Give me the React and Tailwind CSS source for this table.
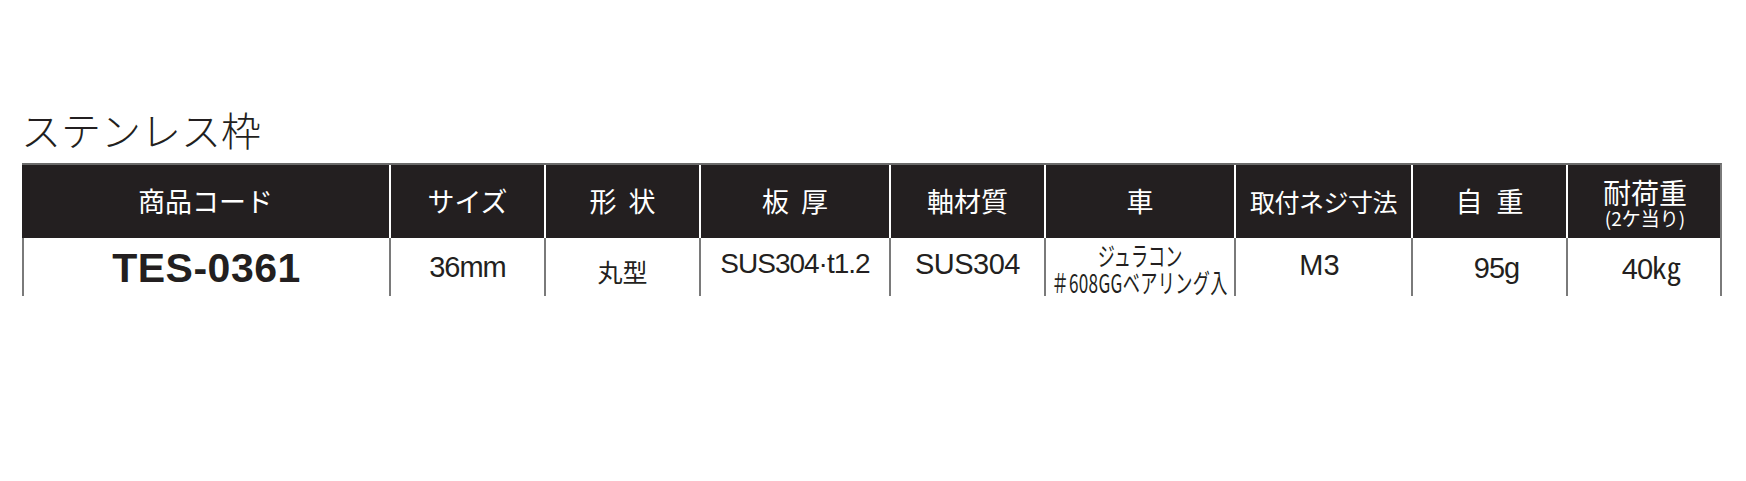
const jp = { fontFamily: '"Noto Sans CJK JP", "Noto Sans", sans-serif' }
const lat = { fontFamily: '"Liberation Sans", "Noto Sans CJK JP", sans-serif' }

const cols = 'grid grid-cols-[367px_155px_155px_190px_155px_190px_177px_155px_156px]'

function Head({ children, first, className = '' }) {
  return (
    <div className={`h-[73px] flex items-center justify-center text-white ${first ? '' : 'border-l-2 border-white'} ${className}`}>
      {children}
    </div>
  )
}

function Cell({ children, className = '' }) {
  return (
    <div className={`h-[58px] flex items-center justify-center border-l-2 border-[#7a7a7a] text-[#231f20] ${className}`}>
      {children}
    </div>
  )
}

export default function App() {
  return (
    <div className="w-[1746px] h-[481px] bg-white pt-[105px] pl-[22px]">
      <h2 className="text-[40px] leading-[48px] font-light text-[#231f20] -ml-[1px]" style={jp}>
        ステンレス枠
      </h2>

      <div className="mt-[10px] w-[1700px] border-t-2 border-[#6b6b6b] border-r-2 border-r-[#7a7a7a]">
        <div className={`${cols} bg-[#231f20] text-[27px] font-normal`} style={jp}>
          <Head first>商品コード</Head>
          <Head>サイズ</Head>
          <Head><span className="flex gap-[12px]"><span>形</span><span>状</span></span></Head>
          <Head><span className="flex gap-[12px]"><span>板</span><span>厚</span></span></Head>
          <Head>軸材質</Head>
          <Head>車</Head>
          <Head><span className="text-[25px] tracking-[-0.5px]">取付ネジ寸法</span></Head>
          <Head><span className="flex gap-[14px]"><span>自</span><span>重</span></span></Head>
          <Head className="flex-col">
            <span className="text-[28px] leading-[30px] mt-[2px]">耐荷重</span>
            <span className="text-[19px] leading-[21px]">(2ケ当り)</span>
          </Head>
        </div>

        <div className={cols}>
          <Cell>
            <span className="text-[41px] font-bold leading-none tracking-[0.5px] mt-[2px]" style={lat}>TES-0361</span>
          </Cell>
          <Cell>
            <span className="text-[29px] leading-none tracking-[-1px]" style={lat}>36mm</span>
          </Cell>
          <Cell>
            <span className="text-[25px] leading-none mt-[8px]" style={jp}>丸型</span>
          </Cell>
          <Cell>
            <span className="text-[28px] leading-none tracking-[-1px] -mt-[6px]" style={lat}>SUS304·t1.2</span>
          </Cell>
          <Cell>
            <span className="text-[29px] leading-none tracking-[-0.5px] -mt-[6px]" style={lat}>SUS304</span>
          </Cell>
          <Cell className="flex-col pt-[2px]">
            <span className="block text-[26px] leading-[27px] scale-x-[0.66] whitespace-nowrap" style={jp}>ジュラコン</span>
            <span className="block text-[26px] leading-[27px] scale-x-[0.66] whitespace-nowrap tracking-[0.5px]" style={jp}>＃608GGベアリング入</span>
          </Cell>
          <Cell>
            <span className="text-[29px] leading-none -mt-[4px] -ml-[8px]" style={lat}>M3</span>
          </Cell>
          <Cell>
            <span className="text-[29px] leading-none tracking-[-1px] ml-[14px] mt-[2px]" style={lat}>95g</span>
          </Cell>
          <Cell>
            <span className="text-[29px] leading-none tracking-[-1px] ml-[12px] mt-[4px]" style={lat}>40㎏</span>
          </Cell>
        </div>
      </div>
    </div>
  )
}
